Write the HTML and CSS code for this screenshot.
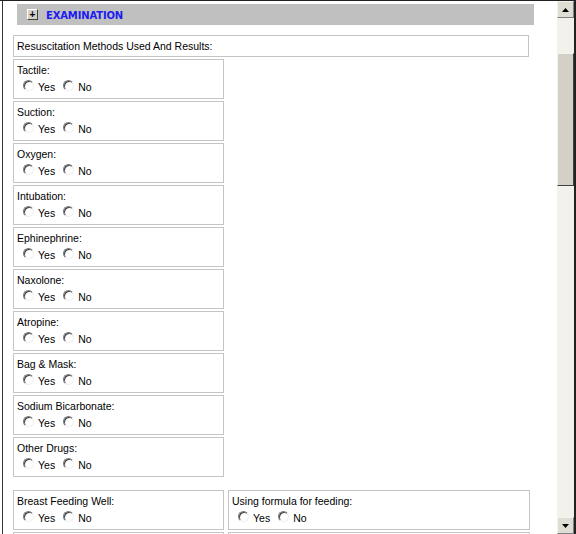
FILE: index.html
```html
<!DOCTYPE html>
<html>
<head>
<meta charset="utf-8">
<link rel="stylesheet" href="styles.css">
</head>
<body>
<div class="frame">
  <div class="main">
    <div class="section-bar">
      <span class="toggle">+</span>
      <span class="section-title">EXAMINATION</span>
    </div>
    <div class="box wide">Resuscitation Methods Used And Results:</div>
    <div class="list">
      <div class="box field"><div class="label">Tactile:</div><div class="opts"><span class="opt"><span class="radio"></span>Yes</span><span class="opt"><span class="radio"></span>No</span></div></div>
      <div class="box field"><div class="label">Suction:</div><div class="opts"><span class="opt"><span class="radio"></span>Yes</span><span class="opt"><span class="radio"></span>No</span></div></div>
      <div class="box field"><div class="label">Oxygen:</div><div class="opts"><span class="opt"><span class="radio"></span>Yes</span><span class="opt"><span class="radio"></span>No</span></div></div>
      <div class="box field"><div class="label">Intubation:</div><div class="opts"><span class="opt"><span class="radio"></span>Yes</span><span class="opt"><span class="radio"></span>No</span></div></div>
      <div class="box field"><div class="label">Ephinephrine:</div><div class="opts"><span class="opt"><span class="radio"></span>Yes</span><span class="opt"><span class="radio"></span>No</span></div></div>
      <div class="box field"><div class="label">Naxolone:</div><div class="opts"><span class="opt"><span class="radio"></span>Yes</span><span class="opt"><span class="radio"></span>No</span></div></div>
      <div class="box field"><div class="label">Atropine:</div><div class="opts"><span class="opt"><span class="radio"></span>Yes</span><span class="opt"><span class="radio"></span>No</span></div></div>
      <div class="box field"><div class="label">Bag &amp; Mask:</div><div class="opts"><span class="opt"><span class="radio"></span>Yes</span><span class="opt"><span class="radio"></span>No</span></div></div>
      <div class="box field"><div class="label">Sodium Bicarbonate:</div><div class="opts"><span class="opt"><span class="radio"></span>Yes</span><span class="opt"><span class="radio"></span>No</span></div></div>
      <div class="box field"><div class="label">Other Drugs:</div><div class="opts"><span class="opt"><span class="radio"></span>Yes</span><span class="opt"><span class="radio"></span>No</span></div></div>
    </div>
    <div class="pair">
      <div class="box field"><div class="label">Breast Feeding Well:</div><div class="opts"><span class="opt"><span class="radio"></span>Yes</span><span class="opt"><span class="radio"></span>No</span></div></div>
      <div class="box field right"><div class="label">Using formula for feeding:</div><div class="opts"><span class="opt"><span class="radio"></span>Yes</span><span class="opt"><span class="radio"></span>No</span></div></div>
    </div>
    <div class="pair">
      <div class="box field"></div>
      <div class="box field right"></div>
    </div>
  </div>
  <div class="scrollbar">
    <div class="sb-btn"><svg width="7" height="4" viewBox="0 0 7 4"><path d="M3.5 0 L7 4 L0 4 Z" fill="#000"/></svg></div>
    <div class="sb-track top"></div>
    <div class="sb-thumb"></div>
    <div class="sb-track bottom"></div>
    <div class="sb-btn"><svg width="7" height="4" viewBox="0 0 7 4"><path d="M0 0 L7 0 L3.5 4 Z" fill="#000"/></svg></div>
  </div>
</div>
</body>
</html>
```
FILE: styles.css
```css
html, body {
  margin: 0;
  padding: 0;
  background: #fff;
}
.frame {
  width: 576px;
  height: 534px;
  box-sizing: border-box;
  border-top: 1px solid #222;
  display: flex;
  overflow: hidden;
  font-family: "Liberation Sans", Arial, sans-serif;
  font-size: 10.5px;
  color: #000;
}
.main {
  flex: 1;
  margin-left: 2px;
  border-left: 1px solid #333;
  padding: 3px 0 0 10px;
  overflow: hidden;
}
.section-bar {
  margin-left: 4px;
  width: 517px;
  height: 21px;
  background: #c0c0c0;
  display: flex;
  align-items: center;
  box-sizing: border-box;
  padding-left: 10px;
  padding-top: 1px;
}
.toggle {
  width: 9px;
  height: 9px;
  border: 1px solid;
  border-color: #fff #404040 #404040 #fff;
  background: #d4d0c8;
  font: bold 10px/9px "Liberation Sans", Arial, sans-serif;
  text-align: center;
  color: #000;
  margin-right: 8px;
  margin-top: -1px;
}
.section-title {
  color: #1c1cf0;
  font-weight: bold;
  font-family: "DejaVu Sans", sans-serif;
  font-size: 10px;
  letter-spacing: -0.15px;
}
.box {
  border: 1px solid #c4c4c4;
  box-sizing: border-box;
  background: #fff;
}
.wide {
  margin-top: 10px;
  width: 516px;
  height: 22px;
  padding: 4px 0 0 3px;
}
.list {
  margin-top: 2px;
  display: flex;
  flex-direction: column;
  gap: 2px;
}
.field {
  width: 211px;
  height: 40px;
  padding: 4px 0 0 3px;
}
.label {
  line-height: 13px;
}
.opts {
  display: flex;
  gap: 8px;
  padding-left: 6px;
  margin-top: 2px;
}
.opt {
  display: inline-flex;
  align-items: flex-start;
  line-height: 17px;
}
.radio {
  width: 11px;
  height: 11px;
  box-sizing: border-box;
  border-radius: 50%;
  border: 1px solid;
  border-color: #7a7a7a #f0f0f0 #f0f0f0 #7a7a7a;
  box-shadow: inset 1px 1px 0 #404040;
  background: #fff;
  margin-top: 1px;
  margin-right: 4px;
}
.pair {
  margin-top: 13px;
  display: flex;
  gap: 4px;
}
.pair + .pair {
  margin-top: 2px;
}
.right {
  width: 302px;
}
.scrollbar {
  width: 17px;
  border-right: 2px solid #222;
  display: flex;
  flex-direction: column;
  background: #f2f0eb;
}
.sb-btn {
  height: 17px;
  box-sizing: border-box;
  border: 1px solid;
  border-color: #f4f3ee #808080 #808080 #f4f3ee;
  background: #e0ddd5;
  display: flex;
  align-items: center;
  justify-content: center;
}
.sb-track {
  background: #f2f1ec;
}
.sb-track.top {
  height: 35px;
}
.sb-thumb {
  height: 133px;
  box-sizing: border-box;
  background: #d4d0c8;
  border: 1px solid;
  border-color: #f4f3ee #404040 #404040 #f4f3ee;
}
.sb-track.bottom {
  flex: 1;
}
```
